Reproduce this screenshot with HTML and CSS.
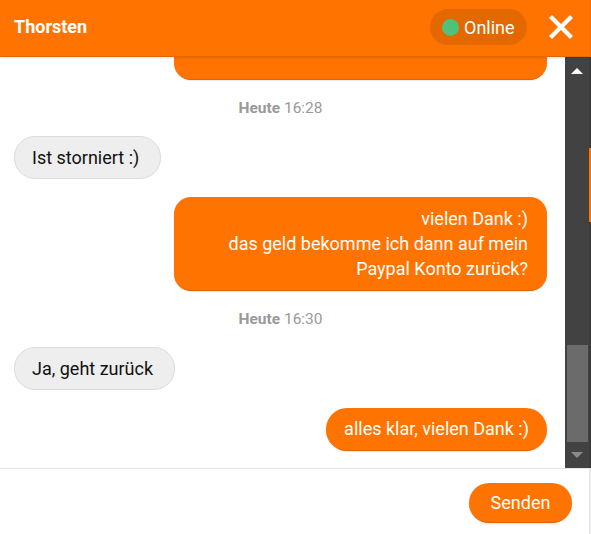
FILE: index.html
```html
<!DOCTYPE html>
<html lang="de">
<head>
<meta charset="utf-8">
<title>Chat</title>
<link rel="stylesheet" href="styles.css">
</head>
<body>
<div class="page">
  <div class="widget">
    <header class="header">
      <div class="title">Thorsten</div>
      <div class="status"><span class="dot"></span>Online</div>
      <button class="close" aria-label="Schließen">
        <svg width="24" height="24" viewBox="0 0 24 24"><path d="M3 3 L21 21 M21 3 L3 21" stroke="#fff" stroke-width="4.2" stroke-linecap="square" fill="none"/></svg>
      </button>
    </header>
    <div class="body">
      <div class="messages">
        <div class="msg out filler"></div>
        <div class="stamp"><b>Heute</b> 16:28</div>
        <div class="msg in">Ist storniert :)</div>
        <div class="msg out multi">vielen Dank :)<br>das geld bekomme ich dann auf mein Paypal Konto zurück?</div>
        <div class="stamp"><b>Heute</b> 16:30</div>
        <div class="msg in">Ja, geht zurück</div>
        <div class="msg out">alles klar, vielen Dank :)</div>
      </div>
      <div class="scrollbar">
        <div class="arrow up"></div>
        <div class="track"></div>
        <div class="thumb"></div>
        <div class="arrow down"></div>
      </div>
    </div>
    <footer class="footer">
      <button class="send">Senden</button>
    </footer>
  </div>
  <div class="edge">
    <div class="edge-top"></div>
    <div class="edge-dark"></div>
    <div class="edge-orange"></div>
    <div class="edge-dark2"></div>
    <div class="edge-light"></div>
  </div>
</div>
</body>
</html>
```

FILE: styles.css
```css
* { box-sizing: border-box; }
html, body { margin: 0; padding: 0; }
body {
  font-family: Roboto, "Noto Sans", "Liberation Sans", sans-serif;
  background: #fff;
  width: 591px;
  height: 534px;
  overflow: hidden;
}
.page {
  display: flex;
  height: 534px;
}
.widget {
  width: 589px;
  display: flex;
  flex-direction: column;
  height: 534px;
}
.header {
  height: 57px;
  flex: none;
  background: #ff7300;
  display: flex;
  align-items: center;
  padding: 0 16px 0 14px;
  border-bottom: 1px solid #e36800;
  box-shadow: 0 1px 2px rgba(0,0,0,0.12);
  position: relative;
  z-index: 2;
}
.title {
  color: #fff;
  font-weight: 700;
  font-size: 18px;
  flex: 1;
  margin-top: -3px;
}
.status {
  display: flex;
  align-items: center;
  height: 36px;
  width: 97px;
  margin-top: -2px;
  padding: 0 0 0 12px;
  border-radius: 18px;
  background: #e46800;
  color: #fff;
  font-size: 18px;
}
.dot {
  width: 17px;
  height: 17px;
  border-radius: 50%;
  background: #4fc27a;
  margin-right: 5px;
}
.close {
  border: 0;
  background: transparent;
  padding: 0;
  margin-left: 22px;
  width: 24px;
  height: 24px;
  display: flex;
  margin-top: -2px;
}
.body {
  flex: 1;
  display: flex;
  min-height: 0;
}
.messages {
  flex: 1;
  min-width: 0;
  display: flex;
  flex-direction: column;
  justify-content: flex-end;
  overflow: hidden;
  padding: 0 18px 17px 14px;
}
.msg {
  flex: none;
  font-size: 18px;
  line-height: 25px;
  padding: 8px 17px;
  border-radius: 21px;
  max-width: 373px;
}
.msg.in {
  align-self: flex-start;
  background: #eeeeee;
  border: 1px solid #dcdcdc;
  color: #111;
  margin-top: 18px;
  padding: 8px 21px 8px 17px;
}
.msg.out {
  align-self: flex-end;
  background: #ff7300;
  color: #fff;
  text-align: right;
  border-bottom: 1px solid #e26600;
  box-shadow: 0 1px 1px rgba(0,0,0,0.08);
  margin-top: 18px;
  padding: 8px 18px 9px;
}
.msg.out.multi {
  width: 373px;
  border-radius: 17px;
  padding: 9px 19px 9px;
}
.msg.out.filler {
  width: 373px;
  height: 80px;
  border-radius: 17px;
  margin-top: 0;
}
.stamp {
  flex: none;
  align-self: center;
  margin: 20px 0 1px;
  font-size: 15.5px;
  line-height: 17px;
  color: #9a9a9a;
}
.stamp b { font-weight: 700; }
.scrollbar {
  width: 24px;
  flex: none;
  background: #424242;
  display: flex;
  flex-direction: column;
  align-items: center;
  padding-bottom: 1px;
}
.arrow {
  height: 25px;
  flex: none;
  width: 100%;
  display: flex;
  align-items: center;
  justify-content: center;
}
.arrow.up::before {
  content: "";
  border-left: 6px solid transparent;
  border-right: 6px solid transparent;
  border-bottom: 6px solid #fff;
  margin-top: 3px;
}
.arrow.down::before {
  content: "";
  border-left: 6px solid transparent;
  border-right: 6px solid transparent;
  border-top: 6px solid #8a8a8a;
}
.track { flex: 1; }
.thumb {
  height: 97px;
  width: 21px;
  background: #6b6b6b;
  flex: none;
}
.footer {
  height: 66px;
  flex: none;
  border-top: 1px solid #e4e4e4;
  display: flex;
  align-items: center;
  justify-content: flex-end;
  padding: 3px 17px 0 0;
  background: #fff;
}
.send {
  width: 103px;
  height: 40px;
  border: 0;
  border-bottom: 1px solid #e06500;
  border-radius: 20px;
  background: #ff7300;
  color: #fff;
  font-family: inherit;
  font-size: 18px;
  padding: 0;
  box-shadow: 0 1px 2px rgba(0,0,0,0.12);
}
.edge {
  width: 2px;
  display: flex;
  flex-direction: column;
}
.edge-top { height: 57px; background: #ff7300; }
.edge-dark { height: 91px; background: #3a3a3a; }
.edge-orange { height: 74px; background: #ff7300; }
.edge-dark2 { flex: 1; background: #3a3a3a; }
.edge-light { height: 66px; background: #e8e8e8; }
```
